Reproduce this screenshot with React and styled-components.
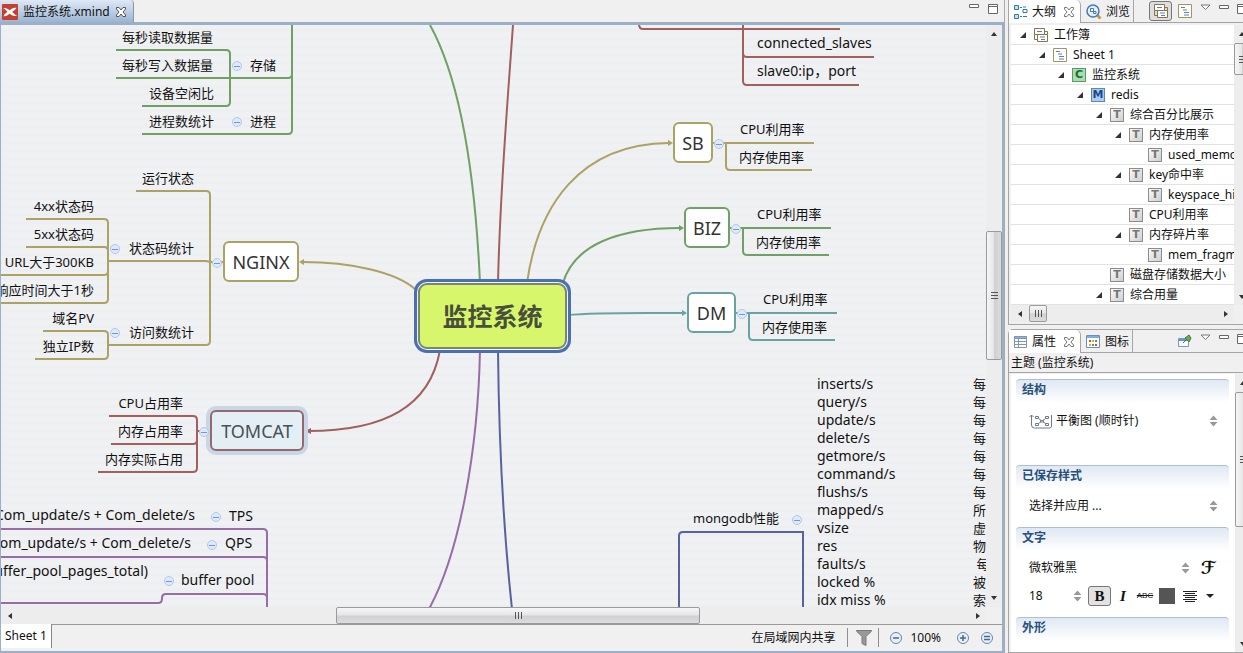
import React from "react";
import styled, { createGlobalStyle, css } from "styled-components";

const GlobalStyle = createGlobalStyle`
  * { box-sizing: border-box; }
  body {
    margin: 0;
    background: #f0f0f0;
    color: #111;
    font-family: "Noto Sans", "Noto Sans CJK SC", sans-serif;
    font-size: 12px;
    line-height: 18px;
    overflow: hidden;
  }
  button, select { font: inherit; color: inherit; margin: 0; padding: 0; border: 0; background: none; }
`;

const palette = {
  green: "#70a065",
  olive: "#aca264",
  red: "#a0605e",
  purple: "#966da6",
  blue: "#5762a0",
  teal: "#68a3a3",
};

/* ---------- window frame ---------- */

const Window = styled.div`
  display: grid;
  grid-template-columns: minmax(0, 1fr) 235px;
  gap: 3px;
  height: 100vh;
`;

const Editor = styled.main`
  display: flex;
  flex-direction: column;
  min-width: 0;
  min-height: 0;
  border-right: 1px solid #aaa;
`;

const EditorTabs = styled.header`
  display: flex;
  align-items: stretch;
  height: 22px;
  flex: none;
`;

const FileTab = styled.div`
  display: flex;
  align-items: center;
  gap: 5px;
  padding: 1px 6px 0 2px;
  border-right: 1px solid #8b97a6;
  border-top-right-radius: 4px;
  background: linear-gradient(#dfe9f6, #9cb5d3);
`;

const WindowButtons = styled.div`
  display: flex;
  align-items: flex-start;
  gap: 9px;
  margin-left: auto;
  padding: 4px 6px 0 0;
`;

const IconButton = styled.button`
  display: flex;
  align-items: center;
  justify-content: center;
  flex: none;
`;

const EditorBody = styled.div`
  flex: 1;
  min-height: 0;
  display: grid;
  grid-template-columns: minmax(0, 1fr) 16px;
  grid-template-rows: minmax(0, 1fr) 17px 27px;
  border: solid #9bb0c8;
  border-width: 3px 2px 2px 1px;
`;

const Canvas = styled.section`
  position: relative;
  overflow: hidden;
  background: repeating-linear-gradient(#f0f1f3 0 3px, #edeef1 5px 6px, #f0f1f3 8px);
`;

/* The board is scrolled by a small amount under the canvas window. */
const Board = styled.div`
  position: absolute;
  left: -1px;
  top: -25px;
  width: 1400px;
  height: 900px;
`;

const Wires = styled.svg`
  position: absolute;
  inset: 0;
  width: 100%;
  height: 100%;
  fill: none;
  stroke-width: 2;
`;

const Topic = styled.div`
  position: absolute;
  white-space: nowrap;
  font-size: ${(p) => (p.$latin ? 14 : 13)}px;
  line-height: 18px;
  ${(p) =>
    p.$end
      ? css`right: ${1400 - p.$x}px;`
      : css`left: ${p.$x}px;`}
  top: ${(p) => p.$y - 10}px;
`;

const MainTopic = styled.div`
  position: absolute;
  left: ${(p) => p.$x}px;
  top: ${(p) => p.$y}px;
  width: ${(p) => p.$w}px;
  height: 41px;
  display: flex;
  align-items: center;
  justify-content: center;
  border: 2px solid ${(p) => p.$color};
  border-radius: 6px;
  background: ${(p) => (p.$hover ? "#e4eef5" : "#fff")};
  box-shadow: ${(p) => (p.$hover ? "0 0 0 4px #c9d6e5" : "none")};
  color: ${(p) => (p.$hover ? "#4a5054" : "#333")};
  font-size: 18px;
`;

const CentralTopic = styled.h1`
  position: absolute;
  left: 418px;
  top: 283px;
  width: 149px;
  height: 66px;
  margin: 0;
  display: flex;
  align-items: center;
  justify-content: center;
  border: 2px solid #7b8570;
  border-radius: 9px;
  background: #d8f66c;
  box-shadow: 0 0 0 1px #eef2fa, 0 0 0 4px #4a70b0;
  color: #48503c;
  font-size: 25px;
  font-weight: 700;
`;

const Fold = styled.button`
  position: absolute;
  left: ${(p) => p.$x - 5}px;
  top: ${(p) => p.$y - 5}px;
  width: 10px;
  height: 10px;
  display: flex;
  align-items: center;
  justify-content: center;
  border: 1px solid #b0c8ee;
  border-radius: 50%;
  background: #dfe9fa;
  &::after {
    content: "";
    width: 6px;
    height: 1px;
    background: #6f98d8;
  }
`;

const Listing = styled.div`
  position: absolute;
  left: 817px;
  top: 375px;
  display: grid;
  grid-template-columns: 156px auto;
  grid-auto-rows: 18px;
  font-size: 13px;
  white-space: pre;
`;

const Metric = styled.span`
  font-size: 14px;
`;

/* ---------- scroll bars ---------- */

const Track = styled.div`
  display: grid;
  min-width: 0;
  min-height: 0;
  background: #ededee;
  ${(p) =>
    p.$vertical
      ? css`grid-template-rows: 17px ${p.$parts} 17px; width: 16px;`
      : css`grid-template-columns: 17px ${p.$parts} 17px; height: 17px;`}
`;

const Thumb = styled.div`
  display: flex;
  align-items: center;
  justify-content: center;
  border: 1px solid #9a9a9a;
  border-radius: 2px;
  background: linear-gradient(${(p) => (p.$vertical ? "90deg" : "180deg")}, #f6f6f6, #e6e6e7 48%, #cfd0d3 52%, #dcdcde);
`;

function ScrollBar({ vertical, before, thumb, after }) {
  return (
    <Track $vertical={vertical} $parts={`${before}fr ${thumb}fr ${after}fr`}>
      <IconButton aria-label={vertical ? "向上滚动" : "向左滚动"}>
        <svg width="8" height="8"><path fill="#333" d={vertical ? "M1 6h6L4 2z" : "M6 1v6L2 4z"} /></svg>
      </IconButton>
      <span />
      <Thumb $vertical={vertical}>
        <svg width="9" height="9" stroke="#555" strokeWidth="1">
          <path d={vertical ? "M1 1.5h7M1 4.5h7M1 7.5h7" : "M1.500 1v7M4.500 1v7M7.500 1v7"} />
        </svg>
      </Thumb>
      <span />
      <IconButton aria-label={vertical ? "向下滚动" : "向右滚动"}>
        <svg width="8" height="8"><path fill="#333" d={vertical ? "M1 2h6L4 6z" : "M2 1v6l4-3z"} /></svg>
      </IconButton>
    </Track>
  );
}

/* ---------- sheet bar ---------- */

const SheetBar = styled.footer`
  grid-column: 1 / -1;
  display: flex;
  align-items: stretch;
  border-top: 1px solid #9a9a9a;
  background: #f0f0f0;
`;

const SheetTab = styled.button`
  height: 24px;
  margin-top: -1px;
  padding: 0 4px;
  border-right: 1px solid #888;
  background: #fff;
`;

const StatusGroup = styled.div`
  display: flex;
  align-items: center;
  gap: 8px;
  margin-left: auto;
  padding: 0 9px 1px 0;
`;

const Divider = styled.i`
  width: 1px;
  height: 19px;
  background: #8f8f8f;
  margin-left: ${(p) => p.$lead || 0}px;
`;

const Zoom = styled.span`
  display: flex;
  align-items: center;
  gap: ${(p) => p.$gap}px;
  margin-left: ${(p) => p.$lead}px;
`;

/* ---------- side panels ---------- */

const Sidebar = styled.aside`
  display: grid;
  grid-template-rows: minmax(0, 325fr) minmax(0, 324fr);
  gap: 4px;
  min-height: 0;
  overflow: hidden;
`;

/* Panels run on past the window's right edge by half a scroll bar. */
const Panel = styled.section`
  width: calc(100% + 8px);
  min-height: 0;
  display: flex;
  flex-direction: column;
  border: 1px solid #a5a5a5;
  border-width: ${(p) => (p.$first ? "0" : "1px")} 0 1px 1px;
  border-top-left-radius: ${(p) => (p.$first ? 0 : 5)}px;
  background: #f0f0f0;
`;

const PanelTabs = styled.header`
  display: flex;
  flex: none;
  height: 23px;
  border-bottom: 1px solid #a5a5a5;
`;

const PanelTab = styled.div`
  display: flex;
  align-items: center;
  gap: 4px;
  padding: 1px 3px 0 5px;
  border-right: 1px solid #a5a5a5;
  ${(p) =>
    p.$active &&
    css`
      background: #fff;
      border-top-right-radius: 5px;
      margin-bottom: -1px;
      padding-bottom: 1px;
      padding-right: 5px;
    `}
  > button { margin-left: 3px; }
`;

const PanelTools = styled.div`
  display: flex;
  align-items: flex-start;
  gap: 8px;
  margin-left: auto;
  padding: 1px 4px 0 0;
`;

const PanelViews = styled.div`
  display: flex;
  gap: 6px;
`;

const PressedButton = styled(IconButton)`
  width: 23px;
  height: 20px;
  border: 1px solid #777;
  border-radius: 3px;
  background: #dedede;
`;

const ToolIcon = styled(IconButton)`
  height: ${(p) => p.$h || 20}px;
`;

const TreeArea = styled.div`
  flex: 1;
  min-height: 0;
  display: grid;
  grid-template-columns: minmax(0, 1fr) 17px;
  grid-template-rows: minmax(0, 1fr) 17px;
  padding: 2px 0 2px 2px;
`;

const Tree = styled.ul`
  margin: 0;
  padding: 0;
  list-style: none;
  overflow: hidden;
  background: #fff;
`;

const TreeRow = styled.li`
  display: flex;
  align-items: center;
  height: 20px;
  padding-left: ${(p) => 8 + p.$level * 19}px;
  border-bottom: 1px solid #e2e2e2;
  white-space: nowrap;
`;

const Twisty = styled.button`
  display: flex;
  width: 15px;
  height: 14px;
  flex: none;
  align-items: center;
  visibility: ${(p) => (p.$leaf ? "hidden" : "visible")};
`;

const badge = {
  C: ["#a5dfae", "#5a9a66", "#1f6b38"],
  M: ["#a9cdf0", "#5c86b8", "#1d4a86"],
  T: ["linear-gradient(135deg, #fafafa, #cfcfcf)", "#8c8c8c", "#777"],
};

const Badge = styled.span`
  display: flex;
  align-items: center;
  justify-content: center;
  flex: none;
  width: 14px;
  height: 14px;
  border: 1px solid ${(p) => badge[p.$kind][1]};
  background: ${(p) => badge[p.$kind][0]};
  color: ${(p) => badge[p.$kind][2]};
  font: 700 11px/12px "DejaVu Sans", sans-serif;
`;

const RowLabel = styled.span`
  margin-left: 6px;
`;

const Subject = styled.div`
  flex: none;
  height: 20px;
  padding: 1px 2px;
  border-bottom: 1px solid #a5a5a5;
`;

const PropertyArea = styled.div`
  flex: 1;
  min-height: 0;
  display: grid;
  grid-template-columns: minmax(0, 1fr) 16px;
  padding: 1px 0 0 2px;
`;

const Form = styled.form`
  overflow: hidden;
  padding: 5px 6px 0 5px;
  background: #fff;
`;

const Section = styled.fieldset`
  margin: 0;
  padding: 0 0 ${(p) => p.$after}px;
  border: 0;
  min-width: 0;
`;

const SectionTitle = styled.h2`
  height: 24px;
  margin: 0;
  padding: 1px 6px;
  border-top: 1px solid #aebfd3;
  border-radius: 4px 4px 0 0;
  background: linear-gradient(#e0e8f3, #fff);
  color: #27507c;
  font-size: 12px;
  line-height: 18px;
  font-weight: 700;
`;

const Field = styled.div`
  display: flex;
  align-items: center;
  gap: 4px;
  height: ${(p) => p.$h}px;
  padding: 0 ${(p) => p.$end || 11}px 0 13px;
`;

const Picker = styled.label`
  display: flex;
  align-items: center;
  flex: ${(p) => (p.$w ? `0 0 ${p.$w}px` : "1")};
  min-width: 0;
  select {
    flex: 1;
    min-width: 0;
    appearance: none;
    outline: 0;
    height: 20px;
    line-height: 18px;
  }
`;

const FormatButton = styled.button`
  width: ${(p) => p.$w || 20}px;
  height: 20px;
  margin-left: ${(p) => p.$lead || 0}px;
  display: flex;
  align-items: center;
  justify-content: center;
  flex: none;
  font-family: "Liberation Serif", serif;
  font-weight: 700;
  font-size: 15px;
  ${(p) => p.$on && css`border: 1px solid #777; border-radius: 3px; background: #e2e2e2;`}
  ${(p) => p.$italic && css`font-style: italic;`}
  ${(p) => p.$script && css`font-size: 18px; font-weight: 700; font-family: "DejaVu Serif", "DejaVu Sans", serif;`}
  ${(p) => p.$strike && css`font: 8px/10px "Liberation Sans", sans-serif; text-decoration: line-through;`}
`;

const Swatch = styled.span`
  width: 16px;
  height: 16px;
  background: #555;
`;

/* ---------- icons ---------- */

const CloseIcon = ({ color = "#777" }) => (
  <svg width="12" height="12" fill="#fff" stroke={color}>
    <path d="M1.500 1.500h2.500L6 4l2-2.500h2.500v1.500L8 6l2.500 3v1.500H8L6 8l-2 2.500H1.500V9L4 6 1.500 3z" />
  </svg>
);
const MinimizeIcon = () => (
  <svg width="10" height="4" fill="#fff" stroke="#666"><path d="M.5.500h9v3h-9z" /></svg>
);
const MaximizeIcon = () => (
  <svg width="10" height="10" fill="#fff" stroke="#666"><path d="M.5.500h9v9h-9zM.5 2.500h9" /></svg>
);
const MenuIcon = () => (
  <svg width="11" height="7" fill="#fff" stroke="#777"><path d="M1 1h9L5.500 5.500z" /></svg>
);
const XmindIcon = () => (
  <svg width="16" height="16">
    <rect width="16" height="16" rx="1" fill="#c5402f" />
    <path d="M1 4c3-.5 5 .8 6.800 2.200C9.500 4.500 11.500 3.200 14.500 3.800c-.8 2-2.700 2.800-4.300 4C11.700 9.500 13 11 15 11.800c-3 1-5.700-.5-7.500-2C6 11 4.500 12.500 1.500 12.300c.8-2.200 2.300-3.200 4-4.500C4.300 6.200 3 5 1 4z" fill="#fff" />
  </svg>
);
const OutlineIcon = () => (
  <svg width="14" height="16" fill="#c6e3f6" stroke="#2e79ad">
    <path d="M.5 1.500h4v4h-4zM.5 10.500h4v4h-4z" />
    <path fill="none" d="M6 3.500h2M6 12.500h2M9 5.500h4v3H9zM9 3h3M9 12.500h4" />
  </svg>
);
const BrowseIcon = () => (
  <svg width="16" height="16" fill="none">
    <path d="M10.500 10.500l4 4" stroke="#c79a4a" strokeWidth="3" />
    <circle cx="7" cy="7" r="6" fill="#e3effb" stroke="#4679b4" strokeWidth="1.500" />
    <path d="M4.500 4.500h3v3h-3zM7.500 7.500H10v2H7.500z" fill="#fff" stroke="#4679b4" />
  </svg>
);
const BookIcon = () => (
  <svg width="14" height="14" fill="#fff" stroke="#85764c">
    <path d="M.5.500h10v6h-10zM3.500 6.500h10v7h-10z" />
    <path stroke="#5c7fb4" d="M3 3.500h5M6 9h5M7 11.500h4" />
    <path fill="none" d="M.5 6.500v5h3M10.500 3.500h3v3" />
  </svg>
);
const SheetIcon = () => (
  <svg width="14" height="14" fill="#fff" stroke="#a39466">
    <path d="M.5.500h13v13H.5z" />
    <path stroke="#5c7fb4" d="M3 3.500h4M5 6h4M6 8.500h5M6 11h5" />
  </svg>
);
const TableIcon = () => (
  <svg width="14" height="12" fill="#fff" stroke="#7f97b5">
    <path d="M.5.500h12v11H.5z" />
    <path fill="#8fb0d8" d="M.5.500h12v2H.5zM.5 5.500h12M.5 8.500h12M4.500 2.500v9" />
  </svg>
);
const MarkerIcon = () => (
  <svg width="15" height="13">
    <path d="M.5.500h13v12H.5z" fill="#fff" stroke="#6b8fb8" />
    <path d="M1 1h12v2H1z" fill="#7eaee0" />
    <path d="M3 5h2v2H3zM9 9h2v2H9z" fill="#d04e36" />
    <path d="M6 5h2v2H6zM3 9h2v2H3z" fill="#e0a734" />
    <path d="M9 5h2v2H9zM6 9h2v2H6z" fill="#4c9d55" />
  </svg>
);
const PinIcon = () => (
  <svg width="14" height="14">
    <path d="M.5 4.500h10v8H.5z" fill="#f7fbff" stroke="#7c9bbd" />
    <path d="M1 5h9v2H1z" fill="#5f97d4" />
    <path d="M5 9l3-3M7 4l4 4 2-4-2-3z" fill="#67ab55" stroke="#3d7a3a" />
  </svg>
);
const StructureIcon = () => (
  <svg width="23" height="15" fill="none" stroke="#707a84">
    <path d="M.5 3L2.500 1l2 2M2.500 1v10q0 3 3 3h15q2 0 2-2V1" />
    <path d="M6.500 2.500h3v2h-3zM16.500 2.500h3v2h-3zM6.500 9.500h3v2h-3zM16.500 9.500h3v2h-3zM9.500 4.500l7 5M16.500 4.500l-7 5" />
    <path d="M11.500 6.500h3v1.500h-3z" fill="#fff" />
  </svg>
);
const SpinIcon = () => (
  <svg width="9" height="12" fill="#999"><path d="M.5 5h8l-4-4.500zM.5 7h8l-4 4.500z" /></svg>
);
const FunnelIcon = () => (
  <svg width="16" height="16" fill="#999" stroke="#777">
    <path d="M.5.500h15c0 2-4.500 4-5.500 6v9l-4-2v-7C5 4.500.5 2.500.5.500z" />
  </svg>
);
const RoundIcon = ({ d }) => (
  <svg width="12" height="12" fill="#e7f0fa" stroke="#44688f">
    <circle cx="6" cy="6" r="5.500" stroke="#6686aa" />
    <path d={d} strokeWidth="1.500" />
  </svg>
);

/* ---------- map data ---------- */

const topics = [
  [122, 38, "每秒读取数据量"], [122, 66, "每秒写入数据量"], [250, 66, "存储"],
  [149, 94, "设备空闲比"], [149, 122, "进程数统计"], [250, 122, "进程"],
  [142, 179, "运行状态"], [129, 249, "状态码统计"], [129, 333, "访问数统计"],
  [229, 517, "TPS", true], [225, 544, "QPS", true], [181, 581, "buffer pool", true],
  [693, 519, "mongodb性能"],
  [740, 130, "CPU利用率"], [739, 158, "内存使用率"],
  [757, 215, "CPU利用率"], [756, 243, "内存使用率"],
  [763, 300, "CPU利用率"], [762, 328, "内存使用率"],
  [757, 44, "connected_slaves", true], [757, 72, "slave0:ip，port", true],
];

const endTopics = [
  [94, 207, "4xx状态码"], [94, 235, "5xx状态码"], [94, 263, "URL大于300KB"],
  [94, 291, "响应时间大于1秒"], [94, 319, "域名PV"], [94, 347, "独立IP数"],
  [183, 404, "CPU占用率"], [183, 432, "内存占用率"], [183, 460, "内存实际占用"],
  [195, 516, "Com_update/s + Com_delete/s", true],
  [191, 544, "Com_update/s + Com_delete/s", true],
  [148, 572, "buffer_pool_pages_total)", true],
];

const mainTopics = [
  [673, 122, 40, "SB", "olive"],
  [684, 207, 46, "BIZ", "green"],
  [687, 292, 49, "DM", "teal"],
  [223, 241, 76, "NGINX", "olive"],
];

const folds = [
  [237, 66], [237, 122], [115, 249], [115, 333], [217, 263], [204, 432], [216, 517],
  [212, 545], [169, 581], [719, 144], [736, 229], [742, 314], [797, 520],
];

const wires = [
  ["green", "M116 50H226q4 0 4 4V102q0 4-4 4H142M116 78H288q4 0 4-4M292 25V130q0 4-4 4H142"],
  ["green", "M430 25C456 72 474 150 480 283M563 283C574 245 618 228 680 228M730 228H831M743 228V251q0 4 4 4H829"],
  ["red", "M513 25C507 110 500 190 498 283M639 24q0 5 4 5H840M743 25V81q0 4 4 4H859M743 53q0 4 4 4H874"],
  ["olive", "M527 283C538 205 580 144 669 143M713 143H814M726 143V166q0 4 4 4H812"],
  ["teal", "M567 315C600 312 650 313 683 313M736 313H837M749 313V336q0 4 4 4H835"],
  ["olive", "M303 262C350 262 397 272 416 290M136 191H206q4 0 4 4V341q0 4-4 4H108M108 261H206l4 1H223"],
  ["olive", "M26 219H104q4 0 4 4V299q0 4-4 4H0M26 247H104q4 0 4 4M0 275H104q4 0 4-4M43 331H104q4 0 4 4V355q0 4-4 4H35"],
  ["red", "M308 431C384 431 430 407 440 350M109 416H193q4 0 4 4V468q0 4-4 4H98M111 444H193q4 0 4-4M197 431H210"],
  ["purple", "M480 350C478 450 460 552 429 609M0 529H263q4 0 4 4V620M0 557H263q4 0 4 4M0 603H158q4 0 4-4V598q0-4 4-4H263q4 0 4 4"],
  ["blue", "M498 350C499 450 504 535 512 609M679 620V536q0-4 4-4H803V620"],
];

const arrows = [
  ["olive", "M668 140v6l5-3z"], ["green", "M679 225v6l5-3z"], ["teal", "M682 310v6l5-3z"],
  ["olive", "M304 259v6l-5-3z"], ["red", "M311 428v6l-6-3z"],
];

const stats = [
  ["inserts/s", "每"], ["query/s", "每"], ["update/s", "每"], ["delete/s", "每"],
  ["getmore/s", "每"], ["command/s", "每"], ["flushs/s", "每"], ["mapped/s", "所"],
  ["vsize", "虚"], ["res", "物"], ["faults/s", " 每"], ["locked %", "被"], ["idx miss %", "索"],
];

const outline = [
  [0, "book", "工作簿"], [1, "sheet", "Sheet 1"], [2, "C", "监控系统"], [3, "M", "redis"],
  [4, "T", "综合百分比展示"], [5, "T", "内存使用率"], [6, "T", "used_memory", true],
  [5, "T", "key命中率"], [6, "T", "keyspace_hits", true], [5, "T", "CPU利用率", true],
  [5, "T", "内存碎片率"], [6, "T", "mem_fragmentation", true],
  [4, "T", "磁盘存储数据大小", true], [4, "T", "综合用量"],
];

function MindMap() {
  return (
    <Canvas>
      <Board>
        <Wires>
          {wires.map(([c, d], i) => <path key={i} stroke={palette[c]} d={d} />)}
          {arrows.map(([c, d], i) => <path key={i} fill={palette[c]} d={d} />)}
        </Wires>
        {topics.map(([x, y, t, latin]) => (
          <Topic key={x + "-" + y} $latin={latin} $x={x} $y={y}>{t}</Topic>
        ))}
        {endTopics.map(([x, y, t, latin]) => (
          <Topic key={x + "-" + y} $end $latin={latin} $x={x} $y={y}>{t}</Topic>
        ))}
        {mainTopics.map(([x, y, w, t, c]) => (
          <MainTopic key={t} $x={x} $y={y} $w={w} $color={palette[c]}>{t}</MainTopic>
        ))}
        <MainTopic $x={210} $y={410} $w={94} $color="#94696e" $hover>TOMCAT</MainTopic>
        <CentralTopic>监控系统</CentralTopic>
        {folds.map(([x, y]) => <Fold key={x + "-" + y} $x={x} $y={y} aria-label="收起" />)}
        <Listing>
          {stats.map(([k, v]) => (
            <React.Fragment key={k}><Metric>{k}</Metric><span>{v}</span></React.Fragment>
          ))}
        </Listing>
      </Board>
    </Canvas>
  );
}

function WindowTools() {
  return (
    <>
      <ToolIcon $h={12} aria-label="菜单"><MenuIcon /></ToolIcon>
      <ToolIcon $h={12} aria-label="最小化"><MinimizeIcon /></ToolIcon>
      <ToolIcon $h={16} aria-label="最大化"><MaximizeIcon /></ToolIcon>
    </>
  );
}

function OutlinePanel() {
  return (
    <Panel $first>
      <PanelTabs>
        <PanelTab $active><OutlineIcon />大纲<IconButton aria-label="关闭"><CloseIcon /></IconButton></PanelTab>
        <PanelTab><BrowseIcon />浏览</PanelTab>
        <PanelTools>
          <PanelViews>
            <PressedButton aria-label="工作簿"><BookIcon /></PressedButton>
            <ToolIcon aria-label="画布"><SheetIcon /></ToolIcon>
          </PanelViews>
          <WindowTools />
        </PanelTools>
      </PanelTabs>
      <TreeArea>
        <Tree>
          {outline.map(([level, kind, text, leaf]) => (
            <TreeRow key={level + text} $level={level}>
              <Twisty $leaf={leaf} aria-label="展开">
                <svg width="8" height="8"><path d="M7 1v6H1z" fill="#333" /></svg>
              </Twisty>
              {kind === "book" ? <BookIcon /> : kind === "sheet" ? <SheetIcon /> : <Badge $kind={kind}>{kind}</Badge>}
              <RowLabel>{text}</RowLabel>
            </TreeRow>
          ))}
        </Tree>
        <ScrollBar vertical before={1} thumb={32} after={213} />
        <ScrollBar before={1} thumb={18} after={170} />
      </TreeArea>
    </Panel>
  );
}

function Choice({ label, value, width }) {
  return (
    <Picker $w={width}>
      <select aria-label={label} defaultValue={value}><option>{value}</option></select>
      <SpinIcon />
    </Picker>
  );
}

function PropertyPanel() {
  return (
    <Panel>
      <PanelTabs>
        <PanelTab $active><TableIcon />属性<IconButton aria-label="关闭"><CloseIcon /></IconButton></PanelTab>
        <PanelTab><MarkerIcon />图标</PanelTab>
        <PanelTools>
          <ToolIcon aria-label="固定"><PinIcon /></ToolIcon>
          <WindowTools />
        </PanelTools>
      </PanelTabs>
      <Subject>主题 (监控系统)</Subject>
      <PropertyArea>
        <Form>
          <Section $after={26}>
            <SectionTitle>结构</SectionTitle>
            <Field $h={36}><StructureIcon /><Choice label="结构" value="平衡图 (顺时针)" /></Field>
          </Section>
          <Section $after={4}>
            <SectionTitle>已保存样式</SectionTitle>
            <Field $h={34}><Choice label="样式" value="选择并应用 ..." /></Field>
          </Section>
          <Section $after={10}>
            <SectionTitle>文字</SectionTitle>
            <Field $h={34}>
              <Choice label="字体" value="微软雅黑" />
              <FormatButton type="button" $script $lead={4} $w={20}>ℱ</FormatButton>
            </Field>
            <Field $h={22}>
              <Choice label="字号" value="18" width={53} />
              <FormatButton type="button" $on $w={23} $lead={2}>B</FormatButton>
              <FormatButton type="button" $italic $w={16}>I</FormatButton>
              <FormatButton type="button" $strike $w={20}>ABC</FormatButton>
              <IconButton type="button" aria-label="文字颜色"><Swatch /></IconButton>
              <FormatButton type="button" aria-label="对齐" $w={40}>
                <svg width="32" height="12" stroke="#222">
                  <path d="M0 1.500h14M2 3.500h10M0 5.500h14M2 7.500h10M0 9.500h14M2 11.500h10" />
                  <path d="M23 4h8l-4 4z" fill="#222" stroke="none" />
                </svg>
              </FormatButton>
            </Field>
          </Section>
          <Section $after={0}>
            <SectionTitle>外形</SectionTitle>
          </Section>
        </Form>
        <ScrollBar vertical before={1} thumb={136} after={108} />
      </PropertyArea>
    </Panel>
  );
}

export default function App() {
  return (
    <Window>
      <GlobalStyle />
      <Editor>
        <EditorTabs>
          <FileTab>
            <XmindIcon />
            监控系统.xmind
            <IconButton aria-label="关闭"><CloseIcon color="#555" /></IconButton>
          </FileTab>
          <WindowButtons>
            <IconButton aria-label="最小化"><MinimizeIcon /></IconButton>
            <IconButton aria-label="最大化"><MaximizeIcon /></IconButton>
          </WindowButtons>
        </EditorTabs>
        <EditorBody>
          <MindMap />
          <ScrollBar vertical before={189} thumb={130} after={230} />
          <ScrollBar before={318} thumb={364} after={269} />
          <span />
          <SheetBar>
            <SheetTab>Sheet 1</SheetTab>
            <StatusGroup>
              <span>在局域网内共享</span>
              <Divider $lead={4} />
              <IconButton aria-label="筛选"><FunnelIcon /></IconButton>
              <Divider $lead={-2} />
              <Zoom $gap={8} $lead={3}>
                <IconButton aria-label="缩小"><RoundIcon d="M3 6h6" /></IconButton>
                <span>100%</span>
              </Zoom>
              <Zoom $gap={12} $lead={8}>
                <IconButton aria-label="放大"><RoundIcon d="M3 6h6M6 3v6" /></IconButton>
                <IconButton aria-label="适合窗口"><RoundIcon d="M3 4.500h6M3 7.500h6" /></IconButton>
              </Zoom>
            </StatusGroup>
          </SheetBar>
        </EditorBody>
      </Editor>
      <Sidebar>
        <OutlinePanel />
        <PropertyPanel />
      </Sidebar>
    </Window>
  );
}
